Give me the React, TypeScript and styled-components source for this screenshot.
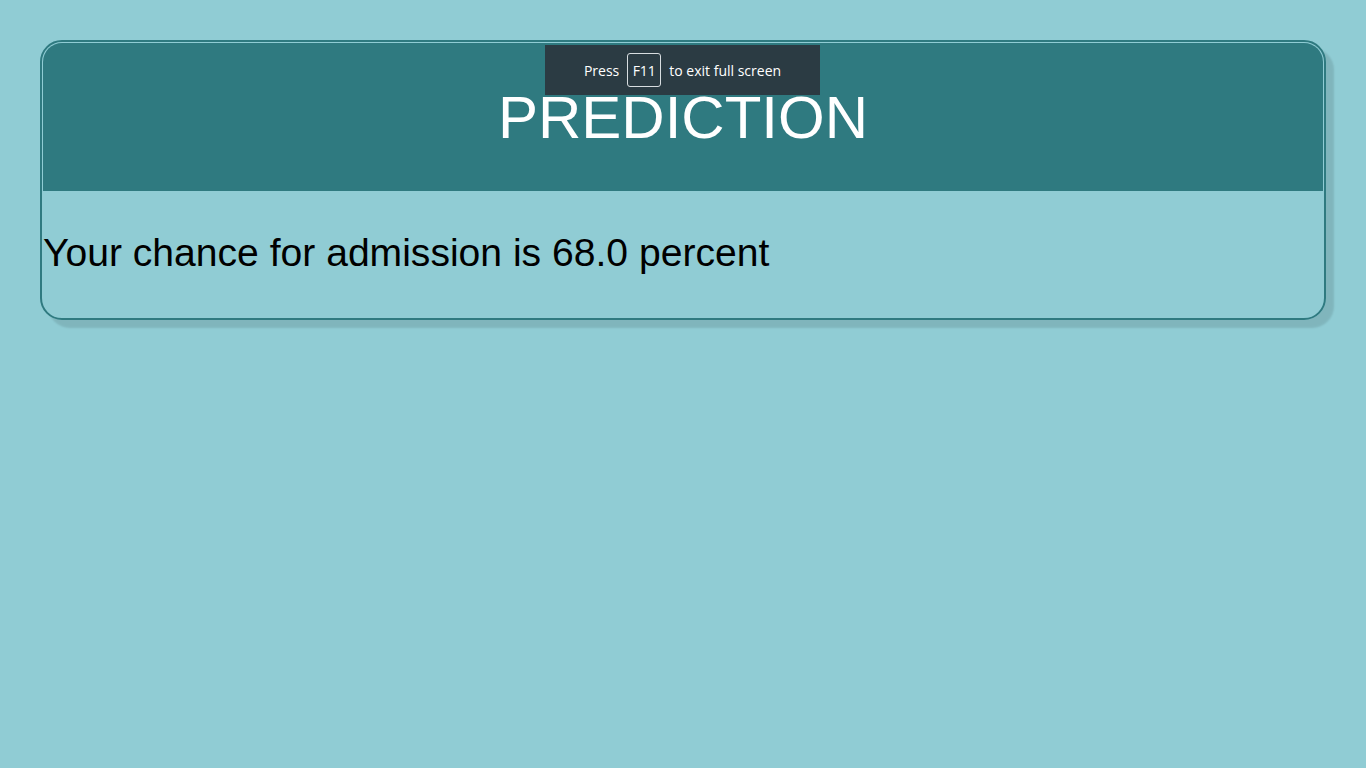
import { FC } from 'react';
import { createGlobalStyle, styled } from 'styled-components';

const GlobalStyle = createGlobalStyle`
	html, body {
		margin: 0;
		padding: 0;
		background-color: #90ccd4;
		font-family: "Liberation Sans", Arial, sans-serif;
	}
`;

const App: FC = () => (
	<>
		<GlobalStyle />
		<Page>
			<Card>
				<Header>
					<h1>PREDICTION</h1>
				</Header>
				<Result>Your chance for admission is 68.0 percent</Result>
			</Card>
			<FullscreenNotice>
				<span>Press</span>
				<kbd>F11</kbd>
				<span>to exit full screen</span>
			</FullscreenNotice>
		</Page>
	</>
);

export default App;

const Page = styled.div`
	position: relative;
	min-height: 768px;
	padding: 40px;
	box-sizing: border-box;
`;

const Card = styled.div`
	border: 2px solid #2f7a80;
	border-radius: 22px;
	padding: 1px;
	box-shadow: 8px 8px 2px rgba(0, 0, 0, 0.11);
	overflow: hidden;
`;

const Header = styled.div`
	display: flex;
	align-items: center;
	justify-content: center;
	height: 148px;
	background-color: #2f7a80;
	border-radius: 19px 19px 0 0;

	& > h1 {
		margin: 0;
		font-size: 60px;
		font-weight: 400;
		line-height: 69px;
		color: #ffffff;
	}
`;

const Result = styled.p`
	margin: 0;
	padding: 39px 0 41px;
	font-size: 39.1px;
	line-height: 46px;
	color: #000000;
	-webkit-font-smoothing: none;
`;

const FullscreenNotice = styled.div`
	position: absolute;
	top: 45px;
	left: 545px;
	width: 275px;
	height: 50px;
	display: flex;
	align-items: center;
	justify-content: center;
	gap: 8px;
	background-color: #2b3b43;
	color: #ffffff;
	font-family: "Open Sans", "Noto Sans", sans-serif;
	font-size: 14px;

	& > kbd {
		display: flex;
		align-items: center;
		justify-content: center;
		width: 32px;
		height: 32px;
		border: 1px solid #d8dde0;
		border-radius: 3px;
		font-family: inherit;
		font-size: 14px;
	}
`;
